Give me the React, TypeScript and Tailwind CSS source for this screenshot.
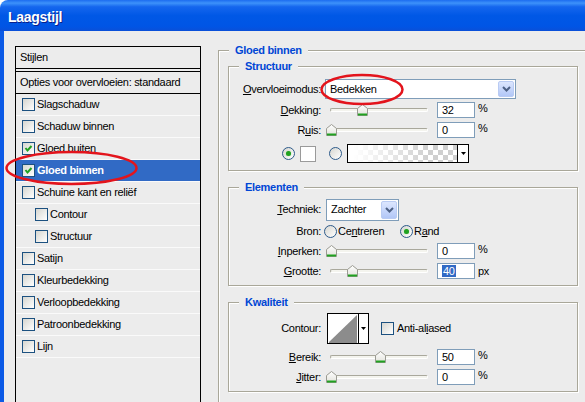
import React from 'react';

type Item = { label: string; checked?: boolean; selected?: boolean; indent?: boolean };

const items: Item[] = [
  { label: 'Slagschaduw' },
  { label: 'Schaduw binnen' },
  { label: 'Gloed buiten', checked: true },
  { label: 'Gloed binnen', checked: true, selected: true },
  { label: 'Schuine kant en reliëf' },
  { label: 'Contour', indent: true },
  { label: 'Structuur', indent: true },
  { label: 'Satijn' },
  { label: 'Kleurbedekking' },
  { label: 'Verloopbedekking' },
  { label: 'Patroonbedekking' },
  { label: 'Lijn' },
];

function Check({ checked }: { checked?: boolean }) {
  return (
    <span className="flex h-[13px] w-[13px] shrink-0 items-center justify-center border border-[#1C5180] bg-[linear-gradient(135deg,#d6d6d0,#ffffff)]">
      {checked && (
        <svg width="9" height="9" viewBox="0 0 9 9">
          <path d="M1.5 4 L3.5 6.5 L7.5 2" fill="none" stroke="#21A121" strokeWidth="2" />
        </svg>
      )}
    </span>
  );
}

function Radio({ on }: { on?: boolean }) {
  return (
    <span className="flex h-[13px] w-[13px] shrink-0 items-center justify-center rounded-full border border-[#2C5A8A] bg-[linear-gradient(135deg,#d6d6d0,#ffffff)]">
      {on && <span className="h-[5px] w-[5px] rounded-full bg-[#21A121] shadow-[0_0_1px_#7fd47f]" />}
    </span>
  );
}

function Slider({ pos }: { pos: number }) {
  return (
    <div className="relative ml-[4px] h-[12px] w-[104px] shrink-0">
      <div className="absolute left-[5px] top-[4px] h-[4px] w-[98px] rounded-[2px] border border-[#A9A89C] border-b-white border-r-white bg-[#F4F4EE]" />
      <svg className="absolute top-0" style={{ left: pos }} width="11" height="12" viewBox="0 0 11 12">
        <defs>
          <linearGradient id="th" x1="0" y1="0" x2="0" y2="1">
            <stop offset="0" stopColor="#ffffff" />
            <stop offset="1" stopColor="#E2E2DA" />
          </linearGradient>
        </defs>
        <path d="M0.5 4.5 L5.5 0.5 L10.5 4.5 L10.5 11.5 L0.5 11.5 Z" fill="url(#th)" stroke="#9A9A92" />
        <rect x="1" y="9.5" width="9" height="2" fill="#21A121" />
      </svg>
    </div>
  );
}

function Field({ value, sel }: { value: string; sel?: boolean }) {
  return (
    <div className="ml-[8px] flex h-[16px] w-[38px] shrink-0 items-center border border-[#7F9DB9] bg-white pl-[4px] leading-[12px]">
      {sel ? <span className="bg-[#316AC5] px-[1px] text-white">{value}</span> : value}
    </div>
  );
}

function Unit({ text }: { text: string }) {
  return <span className="ml-[3px] self-start leading-[13px]">{text}</span>;
}

function Combo({ text, className }: { text: string; className: string }) {
  return (
    <div className={`flex shrink-0 items-center border border-[#7F9DB9] bg-white p-[1px] ${className}`}>
      <span className="flex-1 pl-[3px]">{text}</span>
      <span className="flex h-full w-[16px] items-center justify-center rounded-[2px] border border-[#B9CBF3] bg-[linear-gradient(to_bottom,#DCE6FE,#B2C7F7)]">
        <svg width="9" height="6" viewBox="0 0 9 6">
          <path d="M1 1 L4.5 4.5 L8 1" fill="none" stroke="#4D6185" strokeWidth="2" />
        </svg>
      </span>
    </div>
  );
}

function Row({ label, children, className }: { label: React.ReactNode; children: React.ReactNode; className: string }) {
  return (
    <div className={`flex items-center ${className}`}>
      <div className="w-[92px] shrink-0 text-right">{label}</div>
      {children}
    </div>
  );
}

function Group({ title, children, className }: { title: string; children: React.ReactNode; className: string }) {
  return (
    <div className={`flex flex-col border border-[#A9A799] shadow-[inset_1px_1px_0_#fff,1px_1px_0_#fff] ${className}`}>
      <span className="-mt-[8px] ml-[10px] self-start bg-[#ECECEC] px-[6px] font-bold leading-[14px] text-[#0046D5]">
        {title}
      </span>
      {children}
    </div>
  );
}

function Arrow() {
  return (
    <svg width="5" height="3" viewBox="0 0 5 3">
      <path d="M0 0 H5 L2.5 3 Z" fill="#000" />
    </svg>
  );
}

function StyleList() {
  return (
    <div className="flex h-[380px] w-[186px] shrink-0 flex-col border-x border-t border-black">
      <div className="flex h-[22px] items-center border-b border-black pl-[4px]">Stijlen</div>
      <div className="flex h-[23px] items-center border-y border-black mt-[2px] pl-[4px]">
        Opties voor overvloeien: standaard
      </div>
      {items.map((it) => (
        <div
          key={it.label}
          className={`flex h-[22px] items-center gap-[2px] border-b border-[#FAFAFA] ${
            it.indent ? 'pl-[19px]' : 'pl-[6px]'
          } ${it.selected ? 'bg-[#316AC5] font-bold text-white' : ''}`}
        >
          <Check checked={it.checked} />
          <span>{it.label}</span>
        </div>
      ))}
    </div>
  );
}

export default function App() {
  return (
    <div className="relative flex h-[402px] w-[585px] flex-col overflow-hidden rounded-tl-[8px] bg-white font-['Liberation_Sans',Arial,sans-serif] text-[11px] tracking-[-0.3px] text-black">
      <div className="flex h-[31px] shrink-0 items-center bg-[linear-gradient(to_bottom,#1C6CF0_0%,#3D92FA_10%,#1566EE_22%,#0058E6_50%,#0055E5_85%,#0A4FD8_100%)] pl-[8px] pt-[3px] text-[14px] font-bold text-white [text-shadow:1px_1px_0_#0A1F8A]">
        Laagstijl
      </div>
      <div className="flex min-h-0 flex-1 border-l-[4px] border-[#0B5AE6] bg-[#ECECEC] pl-[11px] pt-[15px]">
        <StyleList />

        <Group title="Gloed binnen" className="ml-[17px] mt-[4px] h-[380px] w-[400px] shrink-0">
          <Group title="Structuur" className="ml-[9px] mt-[9px] w-[350px] pb-[7px]">
            <Row
              className="mt-[6px] h-[20px]"
              label={
                <>
                  <span className="underline">O</span>vervloeimodus:
                </>
              }
            >
              <Combo text="Bedekken" className="ml-[4px] h-[20px] w-[191px]" />
            </Row>
            <Row
              className="mt-[3px] h-[16px]"
              label={
                <>
                  <span className="underline">D</span>ekking:
                </>
              }
            >
              <Slider pos={32} />
              <Field value="32" />
              <Unit text="%" />
            </Row>
            <Row
              className="mt-[4px] h-[16px]"
              label={
                <>
                  R<span className="underline">u</span>is:
                </>
              }
            >
              <Slider pos={1} />
              <Field value="0" />
              <Unit text="%" />
            </Row>
            <div className="mt-[6px] flex h-[19px] items-center pl-[53px]">
              <Radio on />
              <span className="ml-[5px] h-[16px] w-[16px] border border-[#9A9A9A] bg-white" />
              <span className="ml-[13px]">
                <Radio />
              </span>
              <div className="ml-[5px] flex h-[19px] w-[122px] border border-black">
                <div className="flex-1 [background-image:linear-gradient(to_right,#ffffff_5%,rgba(255,255,255,0)_75%),repeating-conic-gradient(#cfcfcf_0_25%,#ffffff_0_50%)] [background-size:100%_100%,10px_10px]" />
                <div className="flex w-[11px] items-center justify-center border-l border-black bg-white">
                  <Arrow />
                </div>
              </div>
            </div>
          </Group>

          <Group title="Elementen" className="ml-[9px] mt-[16px] w-[350px] pb-[6px]">
            <Row
              className="mt-[5px] h-[21px]"
              label={
                <>
                  <span className="underline">T</span>echniek:
                </>
              }
            >
              <Combo text="Zachter" className="ml-[5px] h-[22px] w-[73px]" />
            </Row>
            <Row className="mt-[4px] h-[15px]" label="Bron:">
              <div className="ml-[3px] flex w-[76px] items-center gap-[1px]">
                <Radio />
                <span>
                  Ce<span className="underline">n</span>treren
                </span>
              </div>
              <div className="flex items-center gap-[1px]">
                <Radio on />
                <span>
                  R<span className="underline">a</span>nd
                </span>
              </div>
            </Row>
            <Row
              className="mt-[4px] h-[16px]"
              label={
                <>
                  <span className="underline">I</span>nperken:
                </>
              }
            >
              <Slider pos={1} />
              <Field value="0" />
              <Unit text="%" />
            </Row>
            <Row
              className="mt-[4px] h-[16px]"
              label={
                <>
                  <span className="underline">G</span>rootte:
                </>
              }
            >
              <Slider pos={22} />
              <Field value="40" sel />
              <span className="ml-[3px]">px</span>
            </Row>
          </Group>

          <Group title="Kwaliteit" className="ml-[9px] mt-[16px] w-[350px] pb-[6px]">
            <Row className="mt-[4px] h-[31px]" label="Contour:">
              <div className="ml-[6px] flex h-[31px] w-[42px] shrink-0 border border-black bg-white">
                <svg className="flex-1" width="30" height="29" viewBox="0 0 30 29">
                  <path d="M1 28 L29 1 L29 29 L1 29 Z" fill="#8C8C8C" />
                </svg>
                <div className="flex w-[10px] items-center justify-center border-l border-black">
                  <Arrow />
                </div>
              </div>
              <span className="ml-[12px]">
                <Check />
              </span>
              <span className="ml-[3px]">
                Anti-al<span className="underline">i</span>ased
              </span>
            </Row>
            <Row
              className="mt-[5px] h-[16px]"
              label={
                <>
                  <span className="underline">B</span>ereik:
                </>
              }
            >
              <Slider pos={50} />
              <Field value="50" />
              <Unit text="%" />
            </Row>
            <Row
              className="mt-[4px] h-[16px]"
              label={
                <>
                  <span className="underline">J</span>itter:
                </>
              }
            >
              <Slider pos={1} />
              <Field value="0" />
              <Unit text="%" />
            </Row>
          </Group>
        </Group>
      </div>

      {/* red annotation ellipses */}
      <svg className="pointer-events-none absolute left-0 top-0" width="585" height="402">
        <ellipse cx="71.5" cy="168" rx="65" ry="16" fill="none" stroke="#E3141C" strokeWidth="2.5" />
        <ellipse cx="362" cy="89.5" rx="40.5" ry="14.5" fill="none" stroke="#E3141C" strokeWidth="2.5" />
      </svg>
    </div>
  );
}
